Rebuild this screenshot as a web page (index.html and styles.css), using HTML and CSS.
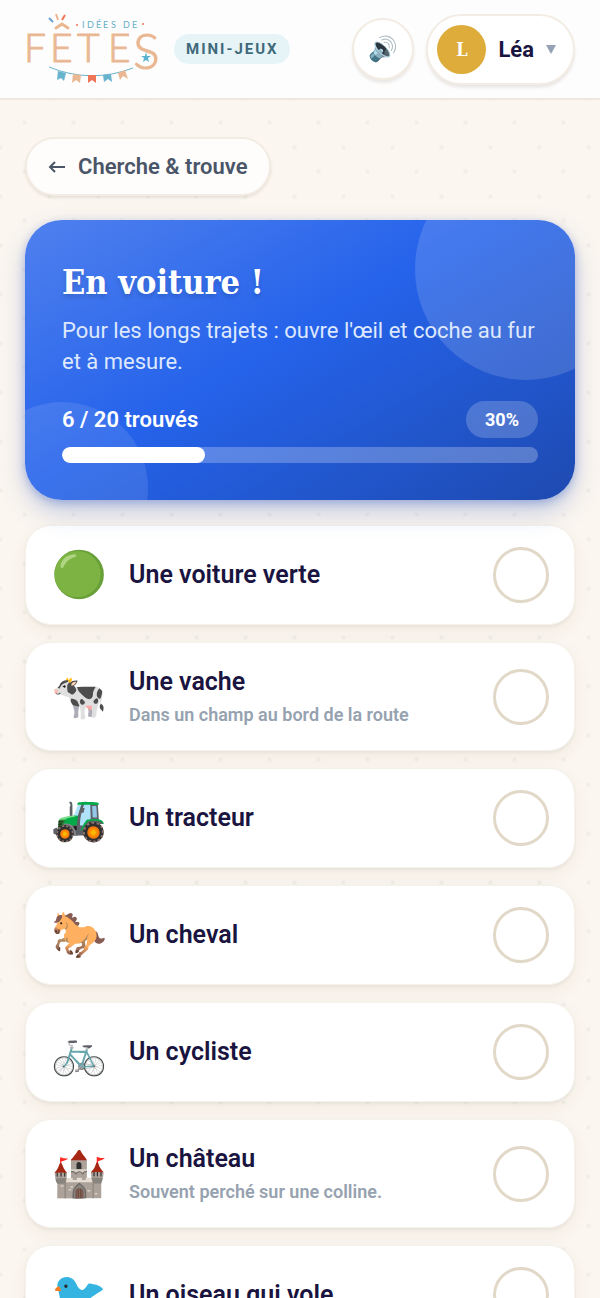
FILE: index.html
```html
<!DOCTYPE html>
<html lang="fr">
<head>
  <meta charset="UTF-8">
  <meta name="viewport" content="width=device-width, initial-scale=1.0">
  <title>En voiture ! | Idées de Fêtes</title>
  <link rel="stylesheet" href="styles.css">
</head>
<body>
  <header class="topbar">
    <a href="#" class="brand">
      <svg class="logo" viewBox="0 0 136 72" role="img" aria-label="Idées de Fêtes">
        <!-- rays and hat of the E -->
        <g fill="none" stroke-width="2">
          <path d="M24 5l4 4" stroke="#6a9fd0"/>
          <path d="M31 1l2 6" stroke="#e9b48f"/>
          <path d="M40 2l-3 5" stroke="#ee7558"/>
        </g>
        <path d="M31 15l6-4 6 4" fill="none" stroke="#e9b893" stroke-width="3" stroke-linecap="round" stroke-linejoin="round"/>
        <circle cx="52" cy="12" r="1" fill="#ee7558"/>
        <circle cx="118" cy="11" r="1" fill="#ee7558"/>
        <text class="logo-small" x="57 62 71 78 86 92 98 107" y="15">IDÉES DE</text>
        <text class="logo-big" x="-1 25 52 83" y="49">FETE</text>
        <text class="logo-big logo-s" x="108" y="56">S</text>
        <path d="M121 39l1 4h4l-3 2 1 4-3-2-3 2 1-4-3-2h4z" fill="#5cb3cf"/>
        <!-- bunting -->
        <path d="M24 54Q66 71 108 55" fill="none" stroke="#6bb4cc" stroke-width="1"/>
        <path d="M33 58l8 2-2 8-3-3-4 2z" fill="#68b4ce"/>
        <path d="M48 61l8 1-1 8-4-3-4 3z" fill="#e9b893"/>
        <path d="M63 62h8v8l-4-3-4 3z" fill="#ee7558"/>
        <path d="M78 62l8-1 1 8-4-3-4 3z" fill="#68b4ce"/>
        <path d="M93 60l7-3 3 9-5-3-3 4z" fill="#e9b893"/>
      </svg>
      <span class="badge">MINI-JEUX</span>
    </a>
    <div class="actions">
      <button type="button" class="sound" aria-label="Son">🔊</button>
      <button type="button" class="profile">
        <span class="avatar">L</span>
        <span>Léa</span>
        <span class="caret"></span>
      </button>
    </div>
  </header>

  <main>
    <a href="#" class="back">
      <svg width="18" height="14" viewBox="0 0 18 14" fill="none" stroke="currentColor" stroke-width="2"><path d="M17 7H2M7 2L2 7l5 5"/></svg>
      Cherche &amp; trouve
    </a>

    <section class="hero">
      <h1>En voiture !</h1>
      <p>Pour les longs trajets : ouvre l'œil et coche au fur et à mesure.</p>
      <div class="score">
        <strong>6 / 20 trouvés</strong>
        <span class="percent">30%</span>
      </div>
      <div class="progress"><div class="progress-fill" style="width: 30%"></div></div>
    </section>

    <ul class="items">
      <li><label class="item"><span class="icon">🟢</span><span class="text"><b>Une voiture verte</b></span><input type="checkbox"></label></li>
      <li><label class="item"><span class="icon">🐄</span><span class="text"><b>Une vache</b><small>Dans un champ au bord de la route</small></span><input type="checkbox"></label></li>
      <li><label class="item"><span class="icon">🚜</span><span class="text"><b>Un tracteur</b></span><input type="checkbox"></label></li>
      <li><label class="item"><span class="icon">🐎</span><span class="text"><b>Un cheval</b></span><input type="checkbox"></label></li>
      <li><label class="item"><span class="icon">🚲</span><span class="text"><b>Un cycliste</b></span><input type="checkbox"></label></li>
      <li><label class="item"><span class="icon">🏰</span><span class="text"><b>Un château</b><small>Souvent perché sur une colline.</small></span><input type="checkbox"></label></li>
      <li><label class="item"><span class="icon">🐦</span><span class="text"><b>Un oiseau qui vole</b></span><input type="checkbox"></label></li>
    </ul>
  </main>
</body>
</html>
```
FILE: styles.css
```css
* {
  box-sizing: border-box;
}

body {
  margin: 0;
  font-family: Roboto, sans-serif;
  color: #1a1440;
  background-color: #fbf6ef;
  background-image:
    radial-gradient(circle, #f1eee7 1px, transparent 3px),
    radial-gradient(circle, #f1eee7 1px, transparent 3px);
  background-size: 49px 49px;
  background-position: 0 0, 25px 25px;
}

button {
  font: inherit;
  color: inherit;
  cursor: pointer;
}

a {
  color: inherit;
  text-decoration: none;
}

.topbar {
  display: flex;
  align-items: center;
  justify-content: space-between;
  height: 100px;
  padding: 0 25px;
  background: #fefdfd;
  border-bottom: 2px solid #f0e8df;
}

.brand {
  display: flex;
  align-items: center;
  gap: 13px;
}

.logo {
  width: 136px;
  height: 72px;
  overflow: visible;
}

.logo-small {
  font: 9px Lato, sans-serif;
  fill: #63aec8;
}

.logo-big {
  font: 300 39px Lato, sans-serif;
  fill: #e9b893;
  stroke: #e9b893;
  stroke-width: 1px;
  stroke-linejoin: round;
}

.logo-s {
  font-size: 50px;
}

.badge {
  padding: 5px 11px 5px 12px;
  border-radius: 20px;
  background: #e6f4f8;
  color: #40697a;
  font-size: 15px;
  line-height: 20px;
  font-weight: 700;
  letter-spacing: 2px;
}

.actions {
  display: flex;
  align-items: center;
  gap: 12px;
}

.sound,
.profile {
  background: #fff;
  border: 2px solid #f3ece4;
  box-shadow: 0 3px 3px rgba(60, 50, 30, 0.1);
}

.sound {
  width: 62px;
  height: 62px;
  padding: 0;
  border-radius: 50%;
  font-size: 24px;
}

.profile {
  display: flex;
  align-items: center;
  gap: 12px;
  height: 71px;
  padding: 0 17px 0 9px;
  border-radius: 36px;
  font-size: 22px;
  font-weight: 700;
}

.avatar {
  width: 49px;
  height: 49px;
  border-radius: 50%;
  background: #deac3a;
  color: #fff;
  font: 700 18px/49px "Roboto Slab", "DejaVu Serif Condensed", "DejaVu Serif", serif;
}

.caret {
  border: 5px solid transparent;
  border-top: 9px solid #94a3b3;
  border-bottom: 0;
}

main {
  padding: 37px 25px;
}

.back {
  display: inline-flex;
  align-items: center;
  gap: 12px;
  height: 59px;
  padding: 0 22px 0 21px;
  border: 2px solid #f3ece4;
  border-radius: 30px;
  background: #fffdfc;
  box-shadow: 0 2px 3px rgba(60, 50, 30, 0.1);
  color: #4a5568;
  font-size: 22px;
  font-weight: 600;
}

.hero {
  position: relative;
  overflow: hidden;
  margin: 24px 0 25px;
  padding: 37px;
  border-radius: 37px;
  background: linear-gradient(150deg, #5080ee, #2563eb 45%, #1e4ab0);
  box-shadow:
    0 3px 8px rgba(37, 80, 190, 0.3),
    0 12px 26px rgba(37, 80, 190, 0.25);
  color: #fff;
}

.hero::before,
.hero::after {
  content: "";
  position: absolute;
  border-radius: 50%;
}

.hero::before {
  top: -62px;
  right: -62px;
  width: 222px;
  height: 222px;
  background: rgba(255, 255, 255, 0.14);
}

.hero::after {
  bottom: -74px;
  left: -49px;
  width: 172px;
  height: 172px;
  background: rgba(255, 255, 255, 0.1);
}

.hero > * {
  position: relative;
  z-index: 1;
}

.hero h1 {
  margin: 0 0 8px;
  font: 700 34px/50px "Roboto Slab", "DejaVu Serif Condensed", "DejaVu Serif", serif;
  text-shadow: 0 3px 4px rgba(0, 0, 0, 0.15);
}

.hero p {
  margin: 0;
  color: #dee8fd;
  font-size: 22px;
  line-height: 31px;
}

.score {
  display: flex;
  align-items: center;
  justify-content: space-between;
  margin: 24px 0 9px;
  font-size: 22px;
}

.score strong {
  font-weight: 600;
}

.percent {
  padding: 0 19px;
  border-radius: 19px;
  background: rgba(255, 255, 255, 0.2);
  font-size: 18px;
  line-height: 37px;
  font-weight: 700;
}

.progress {
  height: 16px;
  overflow: hidden;
  border-radius: 8px;
  background: rgba(255, 255, 255, 0.25);
}

.progress-fill {
  height: 100%;
  border-radius: 8px;
  background: #fff;
}

.items {
  display: grid;
  gap: 17px;
  margin: 0;
  padding: 0;
  list-style: none;
}

.item {
  display: flex;
  align-items: center;
  min-height: 100px;
  padding: 21px 25px;
  border: 1px solid #f5f1eb;
  border-radius: 26px;
  background: #fff;
  box-shadow:
    0 2px 3px rgba(60, 50, 30, 0.05),
    0 6px 18px rgba(60, 50, 30, 0.06);
  cursor: pointer;
}

.icon {
  display: flex;
  justify-content: center;
  width: 56px;
  font-size: 45px;
  line-height: 56px;
}

.text {
  flex: 1;
  margin-left: 22px;
}

.text b {
  display: block;
  font-size: 25px;
  line-height: 36px;
  font-weight: 600;
}

.text small {
  display: block;
  margin-top: 1px;
  color: #96a2af;
  font-size: 18px;
  line-height: 28px;
  font-weight: 600;
}

.item input {
  appearance: none;
  width: 56px;
  height: 56px;
  margin: 0;
  border: 3px solid #e1d8c8;
  border-radius: 50%;
}

.item input:checked {
  background: #2563eb;
}
```
